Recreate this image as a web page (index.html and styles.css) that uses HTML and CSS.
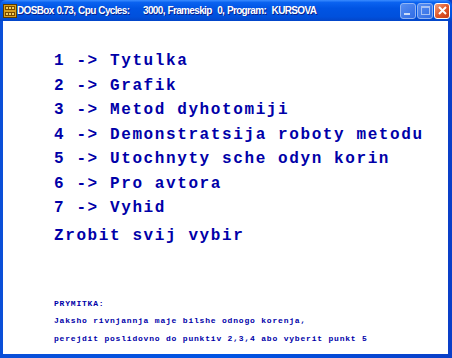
FILE: index.html
```html
<!DOCTYPE html>
<html lang="uk">
<head>
  <meta charset="UTF-8" />
  <title>DOSBox 0.73</title>
  <link rel="stylesheet" href="styles.css">
</head>
<body>
  <div class="window">
    <div class="titlebar">
      <svg class="app-icon" width="14" height="14" viewBox="0 0 14 14">
        <rect x="0" y="0" width="14" height="14" fill="#5a3a00"/>
        <rect x="1" y="1" width="12" height="12" fill="#d8a020"/>
        <rect x="2" y="2" width="10" height="4" fill="#7a4a00"/>
        <rect x="2" y="8" width="10" height="4" fill="#7a4a00"/>
        <rect x="3" y="3" width="2" height="2" fill="#f0d060"/>
        <rect x="6" y="3" width="2" height="2" fill="#f0d060"/>
        <rect x="9" y="3" width="2" height="2" fill="#f0d060"/>
        <rect x="3" y="9" width="2" height="2" fill="#f0d060"/>
        <rect x="6" y="9" width="2" height="2" fill="#f0d060"/>
        <rect x="9" y="9" width="2" height="2" fill="#f0d060"/>
      </svg>
      <span class="title">DOSBox 0.73, Cpu Cycles:     3000, Frameskip  0, Program:  KURSOVA</span>
      <div class="controls">
        <span class="ctl ctl-off"><i class="min-glyph"></i></span>
        <span class="ctl ctl-off"><i class="max-glyph"></i></span>
        <span class="ctl ctl-close">
          <svg width="9" height="9" viewBox="0 0 9 9"><path d="M1 1 L8 8 M8 1 L1 8" stroke="#fff" stroke-width="2"/></svg>
        </span>
      </div>
    </div>

    <div class="screen">
      <ul class="menu">
        <li>1 -&gt; Tytulka</li>
        <li>2 -&gt; Grafik</li>
        <li>3 -&gt; Metod dyhotomiji</li>
        <li>4 -&gt; Demonstratsija roboty metodu</li>
        <li>5 -&gt; Utochnyty sche odyn korin</li>
        <li>6 -&gt; Pro avtora</li>
        <li>7 -&gt; Vyhid</li>
      </ul>
      <p class="prompt">Zrobit svij vybir</p>

      <div class="note">
        <p>PRYMITKA:</p>
        <p>Jaksho rivnjannja maje bilshe odnogo korenja,</p>
        <p>perejdit poslidovno do punktiv 2,3,4 abo vyberit punkt 5</p>
      </div>
    </div>
  </div>
</body>
</html>
```

FILE: styles.css
```css
body {
  margin: 0;
  padding: 0;
  background: #fff;
}
.window {
  width: 452px;
  height: 358px;
  display: flex;
  flex-direction: column;
  background: linear-gradient(to right, #0a4fd8, #0054e3 50%, #0a3fc8);
}
.titlebar {
  height: 21px;
  display: flex;
  align-items: center;
  padding: 0 2px 0 3px;
  background: linear-gradient(to bottom, #3a8cff 0%, #0a62f0 12%, #0054e3 40%, #0050dc 80%, #0345c8 100%);
  border-radius: 6px 6px 0 0;
}
.app-icon {
  flex: none;
  margin-right: 0;
}
.title {
  flex: 1;
  color: #fff;
  font: bold 10px "Liberation Sans", "DejaVu Sans", sans-serif;
  letter-spacing: -0.65px;
  word-spacing: 0.6px;
  white-space: pre;
  overflow: hidden;
  text-shadow: 1px 1px 0 #0a1e8a;
}
.controls {
  display: flex;
  gap: 1px;
}
.ctl {
  width: 16px;
  height: 16px;
  border: 1px solid #fff;
  border-radius: 3px;
  box-sizing: border-box;
  display: flex;
  align-items: center;
  justify-content: center;
}
.ctl-off {
  background: linear-gradient(135deg, #6c9cf4, #3d74e8);
  border-color: #b4ccf8;
  opacity: 0.8;
}
.ctl-close {
  background: linear-gradient(135deg, #f0a080, #e0582a 50%, #c83a14);
}
.min-glyph {
  display: block;
  width: 6px;
  height: 2px;
  background: #fff;
  margin-top: 6px;
  margin-right: 3px;
}
.max-glyph {
  display: block;
  width: 7px;
  height: 6px;
  border: 1px solid #d0dcf8;
  border-top-width: 2px;
}
.screen {
  flex: 1;
  margin: 0 4px 4px 3px;
  background: #fff;
  padding: 28px 0 0 51px;
  color: #0000a8;
  font-family: "Liberation Mono", "DejaVu Sans Mono", monospace;
  font-weight: bold;
}
.menu {
  list-style: none;
  margin: 0;
  padding: 0;
}
.menu li {
  font-size: 16px;
  line-height: 24.5px;
  letter-spacing: 1.6px;
  white-space: pre;
}
.prompt {
  margin: 3px 0 0;
  font-size: 16px;
  line-height: 24px;
  letter-spacing: 1.6px;
}
.note {
  margin-top: 47px;
}
.note p {
  margin: 0;
  font-size: 8px;
  line-height: 17.5px;
  letter-spacing: 0.8px;
  white-space: pre;
}
```
